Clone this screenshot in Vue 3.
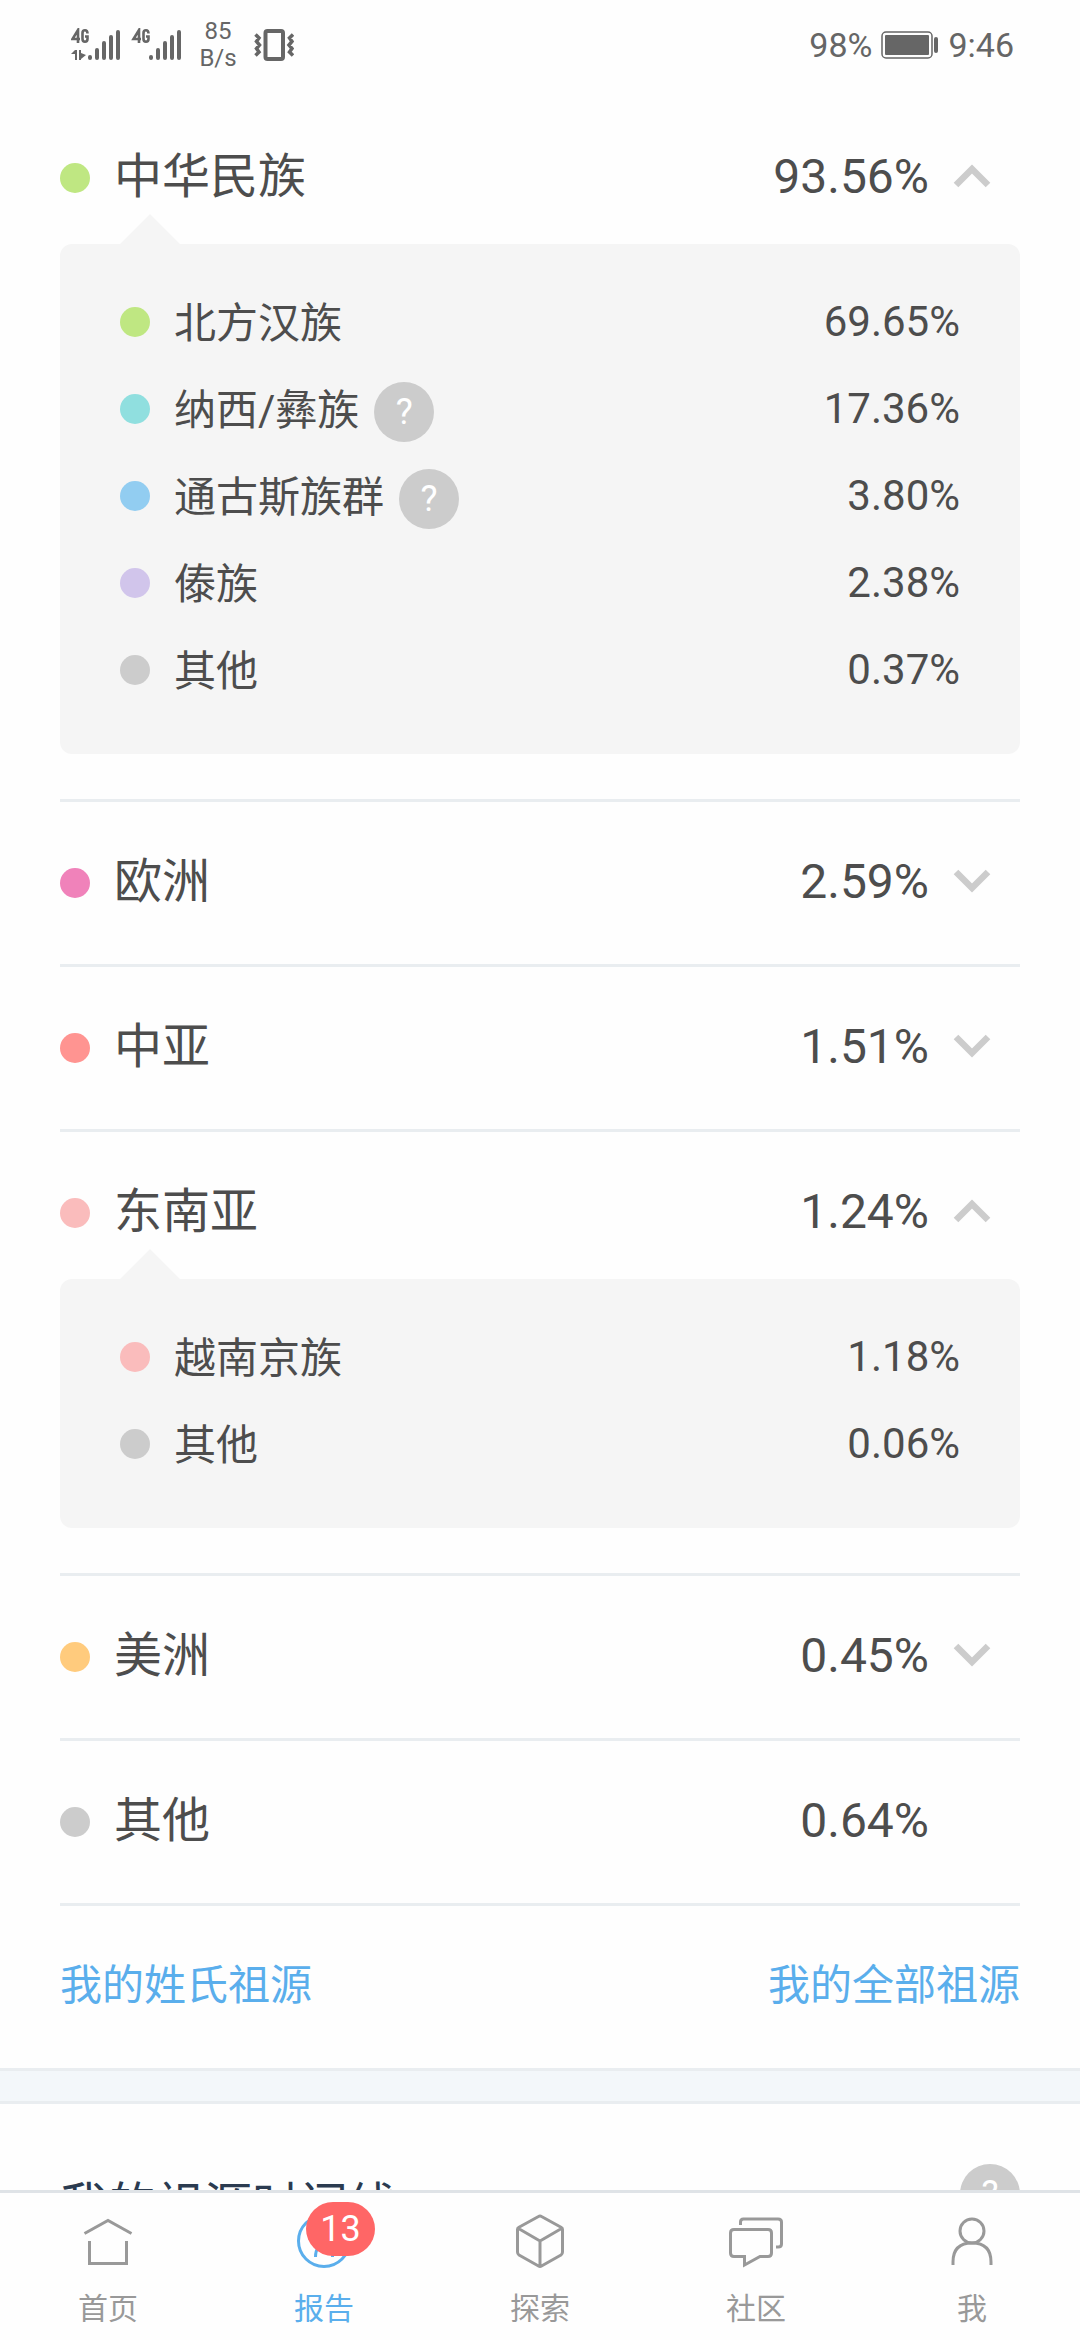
<script setup>
import { ref } from 'vue'

const groups = ref([
  {
    name: '中华民族', share: '93.56%', color: '#bfe782', open: true,
    items: [
      { name: '北方汉族', share: '69.65%', color: '#bfe782' },
      { name: '纳西/彝族', share: '17.36%', color: '#90dfdf', help: true },
      { name: '通古斯族群', share: '3.80%', color: '#92cdf1', help: true },
      { name: '傣族', share: '2.38%', color: '#d1c5eb' },
      { name: '其他', share: '0.37%', color: '#cccccc' },
    ],
  },
  { name: '欧洲', share: '2.59%', color: '#f082ba', open: false, items: [] },
  { name: '中亚', share: '1.51%', color: '#ff9491', open: false, items: [] },
  {
    name: '东南亚', share: '1.24%', color: '#fabcbc', open: true,
    items: [
      { name: '越南京族', share: '1.18%', color: '#fabcbc' },
      { name: '其他', share: '0.06%', color: '#cccccc' },
    ],
  },
  { name: '美洲', share: '0.45%', color: '#ffcb7d', open: false, items: [] },
  { name: '其他', share: '0.64%', color: '#cccccc', leaf: true, items: [] },
])

const tabs = [
  { id: 'home', label: '首页' },
  { id: 'report', label: '报告', badge: 13 },
  { id: 'explore', label: '探索' },
  { id: 'community', label: '社区' },
  { id: 'me', label: '我' },
]
const current = ref('report')

function toggle(group) {
  if (!group.leaf) group.open = !group.open
}
</script>

<template>
  <div class="page">
    <header class="status">
      <div class="status-side">
        <svg class="signals" width="112" height="34" viewBox="0 0 112 34" fill="none" stroke="#666" stroke-linecap="round" stroke-width="4">
          <g stroke-width="2.600" stroke-linecap="butt">
            <path d="M7 15V2L1.500 11H9M16.500 5.500Q16.500 2.300 14 2.300Q11.500 2.300 11.500 5V11Q11.500 13.700 14 13.700Q16.500 13.700 16.500 11V8.500H14" />
            <path d="M68 15V2L62.500 11H70M77.500 5.500Q77.500 2.300 75 2.300Q72.500 2.300 72.500 5V11Q72.500 13.700 75 13.700Q77.500 13.700 77.500 11V8.500H75" />
          </g>
          <path fill="#666" stroke="none" d="M0 26L4 22H6V32H4V26ZM8 22H10V25L15 27L10 31V32H8Z" />
          <path d="M19 29V30M26 22V30M33 15V30M40 9V30M47 4V30" />
          <path d="M80 29V30M87 22V30M94 15V30M101 9V30M108 4V30" />
        </svg>
        <div class="speed"><span>85</span><span>B/s</span></div>
        <svg class="vibrate" width="40" height="32" viewBox="0 0 40 32" fill="none" stroke="#666" stroke-width="4">
          <rect x="11.500" y="2" width="17.500" height="28" rx="2" />
          <path stroke-width="3.500" d="M1.500 5.500L5 9L2.500 12.500L5.500 16L2.500 19.500L5 23L1.500 26.500M39 5.500L35.500 9L38 12.500L35 16L38 19.500L35.500 23L39 26.500" />
        </svg>
      </div>
      <div class="status-side right">
        <span>98%</span>
        <svg class="battery" width="58" height="28" viewBox="0 0 58 28" fill="#666">
          <rect x="1" y="1" width="50" height="26" rx="4" fill="none" stroke="#666" stroke-width="1.500" />
          <rect x="4" y="4" width="44" height="20" rx="1" />
          <rect x="53" y="6" width="4" height="16" rx="2" />
        </svg>
        <span>9:46</span>
      </div>
    </header>

    <main class="content">
      <section v-for="group in groups" :key="group.name" class="group">
        <button class="summary" type="button" :aria-expanded="group.leaf ? null : group.open" @click="toggle(group)">
          <i class="dot" :style="{ background: group.color }"></i>
          <span class="name">{{ group.name }}</span>
          <span class="share">{{ group.share }}</span>
          <span class="arrow">
            <svg v-if="!group.leaf" :class="{ down: !group.open }" width="38" height="24" viewBox="0 0 38 24" fill="none" stroke="#ccc" stroke-width="6.500">
              <path d="M3 21L19 5L35 21" />
            </svg>
          </span>
        </button>
        <ul v-if="group.open && group.items.length" class="panel">
          <li v-for="item in group.items" :key="item.name" class="item">
            <i class="dot" :style="{ background: item.color }"></i>
            <span class="item-name">{{ item.name }}</span>
            <button v-if="item.help" class="help" type="button" aria-label="说明">?</button>
            <span class="item-share">{{ item.share }}</span>
          </li>
        </ul>
      </section>

      <nav class="links">
        <a href="#surname">我的姓氏祖源</a>
        <a href="#all">我的全部祖源</a>
      </nav>

      <div class="band"></div>

      <section class="timeline">
        <h2>我的祖源时间线</h2>
        <button class="help" type="button" aria-label="说明">?</button>
      </section>
    </main>

    <nav class="tabs">
      <a v-for="tab in tabs" :key="tab.id" :href="'#' + tab.id" class="tab" :class="{ active: current === tab.id }" @click="current = tab.id">
        <span class="tab-icon">
          <svg width="56" height="56" viewBox="0 0 56 56" fill="none" stroke="currentColor" stroke-width="3">
            <path v-if="tab.id === 'home'" d="M4.500 20.500L28 7.500L51.500 20.500M9.500 28V50.500H46.500V28" />
            <g v-else-if="tab.id === 'report'">
              <circle cx="28" cy="28" r="25.500" />
              <path d="M19.500 44Q19.500 38 22 35M36.500 44V38" />
            </g>
            <path v-else-if="tab.id === 'explore'" stroke-linejoin="round" d="M26.500 3.500Q28 2.500 29.500 3.500L49.500 14.500Q50.500 15 50.500 16.500V39Q50.500 41 49 42L29.500 53Q28 54 26.500 53L7 42Q5.500 41 5.500 39V16.500Q5.500 15 6.500 14.500ZM6.500 15.500L28 28L49.500 15.500M28 28V53" />
            <path v-else-if="tab.id === 'community'" d="M12.500 12V9Q12.500 6 15.500 6H50Q53.500 6 53.500 9V31Q53.500 34 50 34H48M6 16.500H40Q43.500 16.500 43.500 20V40Q43.500 43.500 40 43.500H32L16.500 52V43.500H6Q2.500 43.500 2.500 40V20Q2.500 16.500 6 16.500Z" />
            <g v-else>
              <circle cx="28" cy="18" r="12" />
              <path d="M9 52V49Q9 30 28 30Q47 30 47 49V52" />
            </g>
          </svg>
          <b v-if="tab.badge" class="badge">{{ tab.badge }}</b>
        </span>
        <span class="tab-label">{{ tab.label }}</span>
      </a>
    </nav>
  </div>
</template>

<style>
body {
  margin: 0;
  background: #fefefe;
}
</style>

<style scoped>
.page {
  display: flex;
  flex-direction: column;
  height: 100vh;
  color: #4d4d4d;
  font-family: Roboto, "Noto Sans CJK SC", sans-serif;
}
button {
  padding: 0;
  border: 0;
  background: none;
  color: inherit;
  font: inherit;
}
a {
  text-decoration: none;
}
svg {
  display: block;
}
.status {
  display: flex;
  flex: none;
  justify-content: space-between;
  height: 97px;
  padding: 0 66px 0 71px;
  box-sizing: border-box;
  color: #666;
}
.status-side {
  display: flex;
  align-items: center;
  height: 90px;
}
.speed {
  display: flex;
  flex-direction: column;
  width: 40px;
  margin: 0 16px 0 15px;
  font-size: 24px;
  line-height: 27px;
  text-align: center;
}
.right {
  gap: 9px;
  font-size: 34px;
}
.content {
  flex: 1;
  min-height: 0;
  overflow: hidden;
}
.group {
  margin: 0 60px;
  border-bottom: 3px solid #e9edf0;
}
.summary {
  display: flex;
  align-items: center;
  width: 100%;
  height: 162px;
  font-size: 48px;
  line-height: 72px;
  text-align: left;
}
.dot {
  flex: none;
  width: 30px;
  height: 30px;
  border-radius: 50%;
}
.name {
  flex: 1;
  margin-left: 24px;
  padding-bottom: 2px;
}
.share {
  padding-bottom: 2px;
}
.arrow {
  width: 38px;
  margin: 0 29px 0 24px;
  padding-bottom: 4px;
}
.down {
  transform: rotate(180deg);
}
.panel {
  position: relative;
  margin: -15px 0 45px;
  padding: 34px 60px 41px;
  border-radius: 12px;
  background: #f5f5f5;
  list-style: none;
}
.panel::before {
  content: "";
  position: absolute;
  top: -30px;
  left: 60px;
  border: 30px solid transparent;
  border-top: 0;
  border-bottom-color: #f5f5f5;
}
.item {
  display: flex;
  align-items: center;
  height: 87px;
  font-size: 42px;
}
.item-name {
  margin-left: 24px;
  padding-bottom: 5px;
}
.item-share {
  margin-left: auto;
}
.help {
  flex: none;
  width: 60px;
  height: 60px;
  border-radius: 50%;
  background: #ccc;
  color: #fff;
  font-size: 36px;
  line-height: 60px;
  text-align: center;
}
.item .help {
  margin: 6px 0 0 15px;
}
.links {
  display: flex;
  justify-content: space-between;
  align-items: center;
  height: 162px;
  padding: 0 60px;
  font-size: 42px;
}
.links a {
  padding-bottom: 12px;
  color: #5aaeec;
}
.band {
  height: 30px;
  border: solid #e9edf0;
  border-width: 3px 0;
  background: #f3f7fa;
}
.timeline {
  display: flex;
  justify-content: space-between;
  align-items: flex-start;
  padding: 60px 60px 0;
}
.timeline h2 {
  margin: 0;
  color: #2b3b50;
  font-size: 48px;
  font-weight: 400;
  line-height: 84px;
}
.tabs {
  display: flex;
  flex: none;
  height: 147px;
  border-top: 3px solid #dfe3e7;
}
.tab {
  display: flex;
  flex: 1;
  flex-direction: column;
  align-items: center;
  padding-top: 20px;
  color: #999;
}
.active {
  color: #5aaeec;
}
.tab-icon {
  position: relative;
}
.badge {
  position: absolute;
  top: -11px;
  left: 10px;
  width: 69px;
  border-radius: 27px;
  background: #ff6666;
  color: #fff;
  font-size: 36px;
  font-weight: 400;
  line-height: 54px;
  text-align: center;
}
.tab-label {
  margin-top: 17px;
  font-size: 30px;
  line-height: 45px;
}
</style>
